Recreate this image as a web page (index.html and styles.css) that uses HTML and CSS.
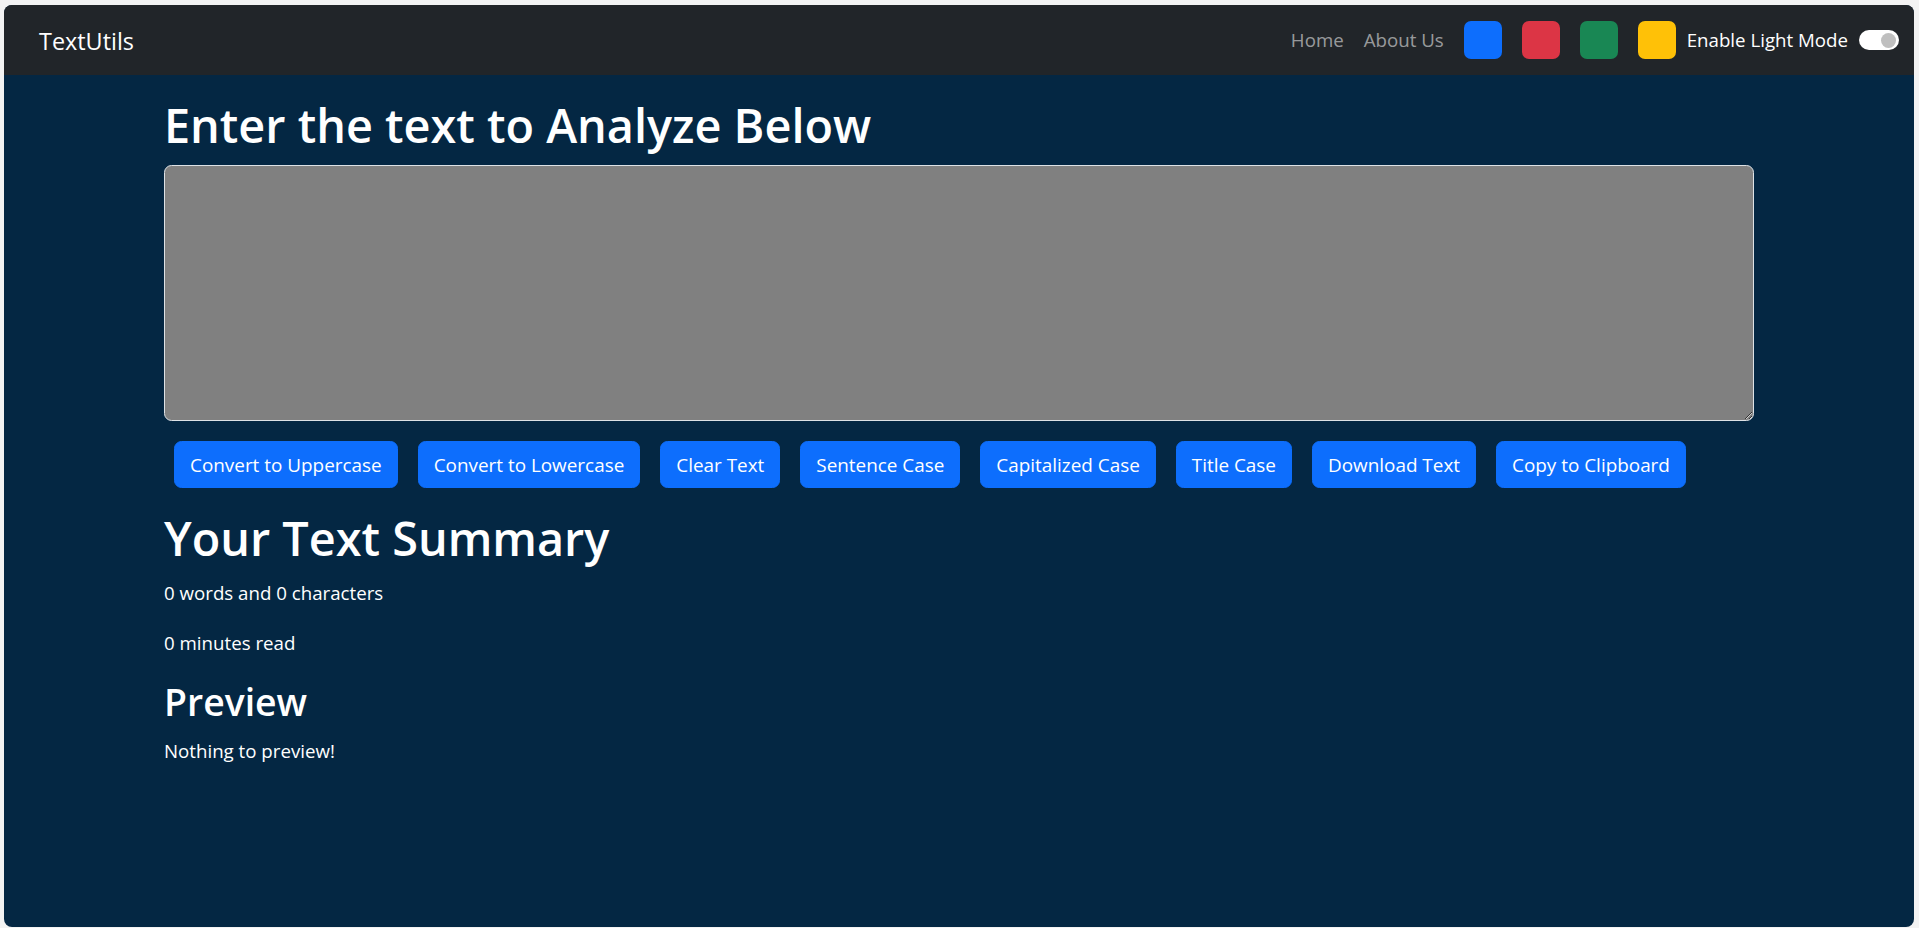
FILE: index.html
```html
<!DOCTYPE html>
<html lang="en">
<head>
<meta charset="utf-8">
<title>TextUtils</title>
<link rel="stylesheet" href="styles.css">
</head>
<body>
<div class="window">
  <nav class="navbar">
    <a class="brand" href="#">TextUtils</a>
    <div class="nav-right">
      <a class="nav-link" href="#">Home</a>
      <a class="nav-link" href="#">About Us</a>
      <span class="swatch swatch-blue"></span>
      <span class="swatch swatch-red"></span>
      <span class="swatch swatch-green"></span>
      <span class="swatch swatch-yellow"></span>
      <label class="mode-label">Enable Light Mode</label>
      <span class="switch"></span>
    </div>
  </nav>
  <main class="container">
    <h1 class="title">Enter the text to Analyze Below</h1>
    <textarea class="text-input" rows="8"></textarea>
    <div class="btn-row">
      <button class="btn">Convert to Uppercase</button>
      <button class="btn">Convert to Lowercase</button>
      <button class="btn">Clear Text</button>
      <button class="btn">Sentence Case</button>
      <button class="btn">Capitalized Case</button>
      <button class="btn">Title Case</button>
      <button class="btn">Download Text</button>
      <button class="btn">Copy to Clipboard</button>
    </div>
    <section class="summary">
      <h1 class="title">Your Text Summary</h1>
      <p class="text">0 words and 0 characters</p>
      <p class="text">0 minutes read</p>
      <h2 class="subtitle">Preview</h2>
      <p class="text">Nothing to preview!</p>
    </section>
  </main>
</div>
</body>
</html>
```
FILE: styles.css
```css
* {
  box-sizing: border-box;
}

html, body {
  margin: 0;
  padding: 0;
}

body {
  background: #f3f3f3;
  font-family: "Open Sans", "Noto Sans", sans-serif;
  font-size: 18.7px;
  line-height: 30px;
  color: #fff;
  overflow: hidden;
}

.window {
  margin: 5px 5px 0 4px;
  height: 922px;
  border-radius: 8px;
  overflow: hidden;
  background: #042743;
}

.navbar {
  display: flex;
  align-items: center;
  height: 70px;
  padding: 0 15px 0 35px;
  background: #212529;
}

.brand {
  color: #fff;
  text-decoration: none;
  font-size: 23.4px;
  line-height: 30px;
  margin-top: 2px;
}

.nav-right {
  margin-left: auto;
  display: flex;
  align-items: center;
}

.nav-link {
  color: rgba(255, 255, 255, 0.55);
  text-decoration: none;
  padding: 0 10px;
}

.swatch {
  width: 38px;
  height: 38px;
  border-radius: 7px;
  margin: 0 10px;
}

.swatch-blue { background: #0d6efd; }
.swatch-red { background: #dc3545; }
.swatch-green { background: #198754; }
.swatch-yellow { background: #ffc107; }

.mode-label {
  margin-left: 1px;
  color: #fff;
}

.switch {
  position: relative;
  width: 40px;
  height: 20px;
  margin-left: 11px;
  border-radius: 10px;
  background: #fff;
}

.switch::after {
  content: "";
  position: absolute;
  right: 3px;
  top: 2.5px;
  width: 15px;
  height: 15px;
  border-radius: 50%;
  background: #bfbfbf;
}

.container {
  width: 1590px;
  margin: 0 auto;
  padding-top: 20px;
}

.title {
  margin: 0 0 10px;
  font-size: 46.8px;
  font-weight: 600;
  line-height: 60px;
}

.text-input {
  display: block;
  width: 100%;
  height: 256px;
  margin: 0 0 20px;
  padding: 7px 15px;
  background: #808080;
  color: #fff;
  border: 1px solid #dee2e6;
  border-radius: 7.5px;
  font-family: inherit;
  font-size: 18.7px;
  line-height: 30px;
}

.btn-row {
  display: flex;
  flex-wrap: wrap;
  padding-left: 10px;
  gap: 20px;
}

.btn {
  background: #0d6efd;
  color: #fff;
  border: 1px solid #0d6efd;
  border-radius: 7.5px;
  padding: 7.5px 15px;
  font-family: inherit;
  font-size: 18.9px;
  line-height: 30px;
}

.summary {
  padding-top: 20px;
}

.text {
  margin: 0 0 20px;
}

.subtitle {
  margin: 0 0 10px;
  font-size: 37.4px;
  font-weight: 600;
  line-height: 48px;
}
```
